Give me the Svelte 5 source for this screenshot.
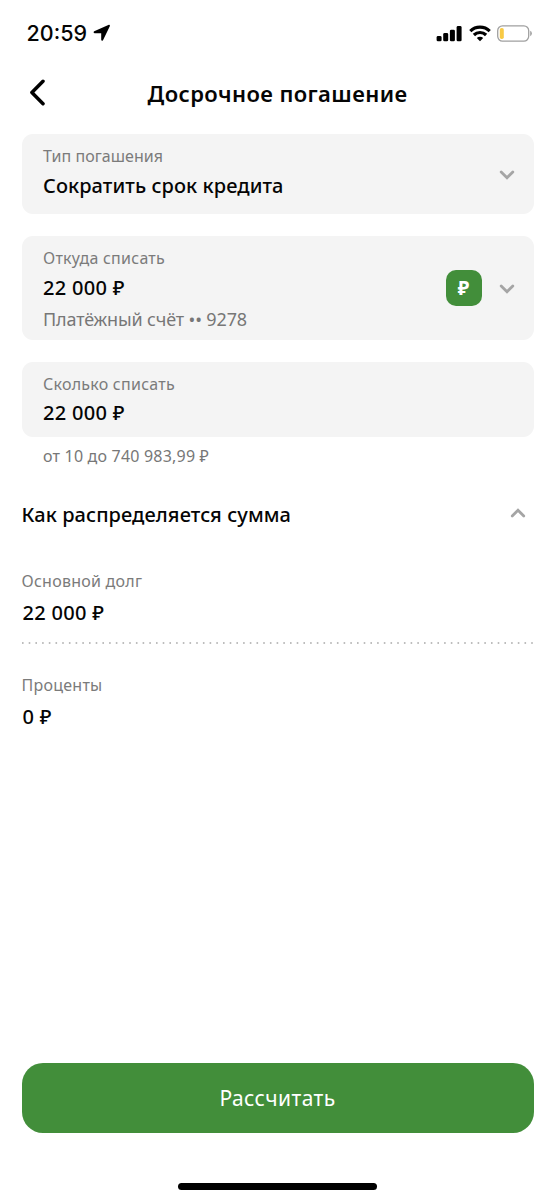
<script>
  let repayType = 'Сократить срок кредита';
  let account = { balance: '22 000 ₽', name: 'Платёжный счёт •• 9278' };
  let amount = '22 000 ₽';
  let limits = 'от 10 до 740 983,99 ₽';
  let expanded = true; // Breakdown section is open by default

  const breakdown = [
    { id: 'debt', label: 'Основной долг', value: '22 000 ₽' },
    { id: 'interest', label: 'Проценты', value: '0 ₽' }
  ];
</script>

<div class="screen">
  <div class="status-bar">
    <span class="time">20:59</span>
    <svg class="location" width="18" height="18" viewBox="0 0 18 18">
      <path d="M15.9 0.8 L1.2 7.2 Q-0.2 8.5 1.5 9.2 H8.2 V15.8 Q8.7 17.7 10 16.2 L16.8 2.2 Q17.2 0.6 15.9 0.8 Z" />
    </svg>
    <div class="indicators">
      <svg width="26" height="17" viewBox="0 0 26 17">
        <rect x="0.6" y="11" width="5" height="5.3" rx="1.4" />
        <rect x="7.2" y="8" width="5" height="8.3" rx="1.4" />
        <rect x="13.9" y="4.7" width="5" height="11.6" rx="1.4" />
        <rect x="20.6" y="1" width="5" height="15.3" rx="1.4" />
      </svg>
      <svg width="22" height="17" viewBox="0 0 22 17">
        <g fill="none" stroke="#000" stroke-width="3.2">
          <path d="M1.3 6.1 A14 14 0 0 1 20.7 6.1" />
          <path d="M4.9 10 A8.7 8.7 0 0 1 17.1 10" />
        </g>
        <path d="M11 16.3 L7.8 13.1 A4.6 4.6 0 0 1 14.2 13.1 Z" />
      </svg>
      <svg width="35" height="17" viewBox="0 0 35 17">
        <rect x="0.7" y="0.9" width="31" height="15.2" rx="4.8" fill="none" stroke="#a0a0a0" stroke-width="1.3" />
        <rect x="2.8" y="3" width="4" height="11" rx="1.8" fill="#f8ca45" />
        <path d="M33.2 5.8 Q34.9 6.6 34.9 8.5 T33.2 11.2 Z" fill="#a0a0a0" />
      </svg>
    </div>
  </div>

  <header class="header">
    <button class="back" aria-label="Назад">
      <svg width="18" height="28" viewBox="0 0 18 28">
        <path d="M16 2.3 L4.9 13.5 L16 24.7" fill="none" stroke="#000" stroke-width="3.5" stroke-linecap="round" stroke-linejoin="round" />
      </svg>
    </button>
    <h1>Досрочное погашение</h1>
  </header>

  <main>
    <button class="card type">
      <span class="text">
        <span class="label">Тип погашения</span>
        <span class="value">{repayType}</span>
      </span>
      <svg class="chevron" width="16" height="10" viewBox="0 0 16 10">
        <path d="M2.2 2 L8 7.8 L13.8 2" />
      </svg>
    </button>

    <button class="card source">
      <span class="text">
        <span class="label">Откуда списать</span>
        <span class="value">{account.balance}</span>
        <span class="account">{account.name}</span>
      </span>
      <span class="currency">₽</span>
      <svg class="chevron" width="16" height="10" viewBox="0 0 16 10">
        <path d="M2.2 2 L8 7.8 L13.8 2" />
      </svg>
    </button>

    <div class="card amount">
      <span class="text">
        <span class="label">Сколько списать</span>
        <span class="value">{amount}</span>
      </span>
    </div>
    <p class="hint">{limits}</p>

    <button class="toggle" on:click={() => (expanded = !expanded)}>
      <span>Как распределяется сумма</span>
      <svg class="chevron" class:closed={!expanded} width="16" height="10" viewBox="0 0 16 10">
        <path d="M2.2 8 L8 2.2 L13.8 8" />
      </svg>
    </button>

    {#if expanded}
      <div class="breakdown">
        {#each breakdown as item, i (item.id)}
          {#if i > 0}
            <svg class="dots" width="512" height="2" viewBox="0 0 512 2">
              <line x1="0" y1="1" x2="512" y2="1" />
            </svg>
          {/if}
          <div class="item">
            <span class="label">{item.label}</span>
            <span class="value">{item.value}</span>
          </div>
        {/each}
      </div>
    {/if}
  </main>

  <footer>
    <button class="submit">Рассчитать</button>
    <div class="home-indicator"></div>
  </footer>
</div>

<style>
  :global(body) {
    margin: 0;
    background: #fff;
  }

  .screen {
    display: flex;
    flex-direction: column;
    width: 555px;
    height: 1200px;
    overflow: hidden;
    box-sizing: border-box;
    background: #fff;
    color: #050505;
    font-family: 'Noto Sans', sans-serif;
  }

  button {
    border: 0;
    padding: 0;
    background: none;
    color: inherit;
    font: inherit;
    text-align: left;
    cursor: pointer;
  }

  svg {
    display: block;
    flex: none;
  }

  .status-bar {
    display: flex;
    align-items: center;
    height: 66px;
    padding: 0 23px 0 26.5px;
    box-sizing: border-box;
  }

  .time {
    width: 61px;
    font-family: Inter, sans-serif;
    font-size: 21.5px;
    font-weight: 500;
    white-space: nowrap;
  }

  .location {
    margin-left: 5px;
  }

  .indicators {
    display: flex;
    align-items: center;
    gap: 6.5px;
    margin-left: auto;
  }

  .header {
    display: grid;
    grid-template-columns: 40px 1fr 40px;
    align-items: center;
    height: 54px;
    padding: 0 27px;
  }

  h1 {
    margin: 0;
    font-size: 22px;
    font-weight: 600;
    line-height: 30px;
    letter-spacing: 0.4px;
    text-align: center;
    white-space: nowrap;
  }

  main {
    display: flex;
    flex-direction: column;
    padding: 14px 21.5px 0;
  }

  .card {
    display: flex;
    align-items: center;
    box-sizing: border-box;
    margin-bottom: 22px;
    padding: 0 19px 0 21.5px;
    border-radius: 11px;
    background: #f4f4f4;
  }

  .card .chevron {
    margin-top: 2px;
  }

  .type {
    height: 80px;
  }

  .source {
    height: 104px;
  }

  .amount {
    height: 74.5px;
    margin-bottom: 0;
  }

  .text {
    display: flex;
    flex: 1;
    flex-direction: column;
    align-self: flex-start;
    padding-top: 12px;
    white-space: nowrap;
  }

  .label {
    color: #7b7b7b;
    font-size: 16px;
    line-height: 20px;
    letter-spacing: 0.25px;
  }

  .value {
    margin-top: 6px;
    font-size: 20px;
    font-weight: 500;
    line-height: 28px;
    letter-spacing: 0.3px;
  }

  .type .label {
    letter-spacing: 0.05px;
  }

  .type .value {
    letter-spacing: 0.08px;
  }

  .amount .value {
    margin-top: 5px;
  }

  .account {
    margin-top: 4px;
    color: #777;
    font-size: 18px;
    line-height: 26px;
    letter-spacing: -0.15px;
  }

  .currency {
    display: flex;
    align-items: center;
    justify-content: center;
    width: 36px;
    height: 36px;
    margin-right: 17px;
    border-radius: 10px;
    background: #428e3a;
    color: #fff;
    font-size: 19px;
    font-weight: 700;
    line-height: 36px;
  }

  .chevron {
    fill: none;
    stroke: #a5a5a5;
    stroke-width: 2.8;
    stroke-linecap: round;
    stroke-linejoin: miter;
  }

  .closed {
    transform: rotate(180deg);
  }

  .hint {
    margin: 8px 0 0 21.5px;
    color: #777;
    font-size: 16px;
    line-height: 22px;
    letter-spacing: 0.2px;
  }

  .toggle {
    display: flex;
    align-items: center;
    justify-content: space-between;
    height: 30px;
    margin-top: 32.5px;
    padding-right: 8px;
    font-size: 20px;
    font-weight: 500;
    letter-spacing: 0.08px;
  }

  .toggle .chevron {
    margin-bottom: 2px;
  }

  .breakdown {
    display: flex;
    flex-direction: column;
    margin-top: 42px;
  }

  .item {
    display: flex;
    flex-direction: column;
    white-space: nowrap;
  }

  .item .value {
    margin-top: 8px;
    padding-left: 1px;
  }

  .dots {
    margin: 15px 0 31px;
    stroke: #a8a8a8;
    stroke-width: 1.5;
    stroke-dasharray: 1.6 5.1;
  }

  footer {
    display: flex;
    flex-direction: column;
    align-items: center;
    margin-top: auto;
    padding: 0 21.5px 10.5px;
  }

  .submit {
    width: 100%;
    height: 69.5px;
    border-radius: 21px;
    background: #428e3a;
    color: #fff;
    font-size: 21px;
    letter-spacing: 0.4px;
    text-align: center;
  }

  .home-indicator {
    width: 199px;
    height: 7px;
    margin-top: 50px;
    border-radius: 4px;
    background: #000;
  }
</style>
